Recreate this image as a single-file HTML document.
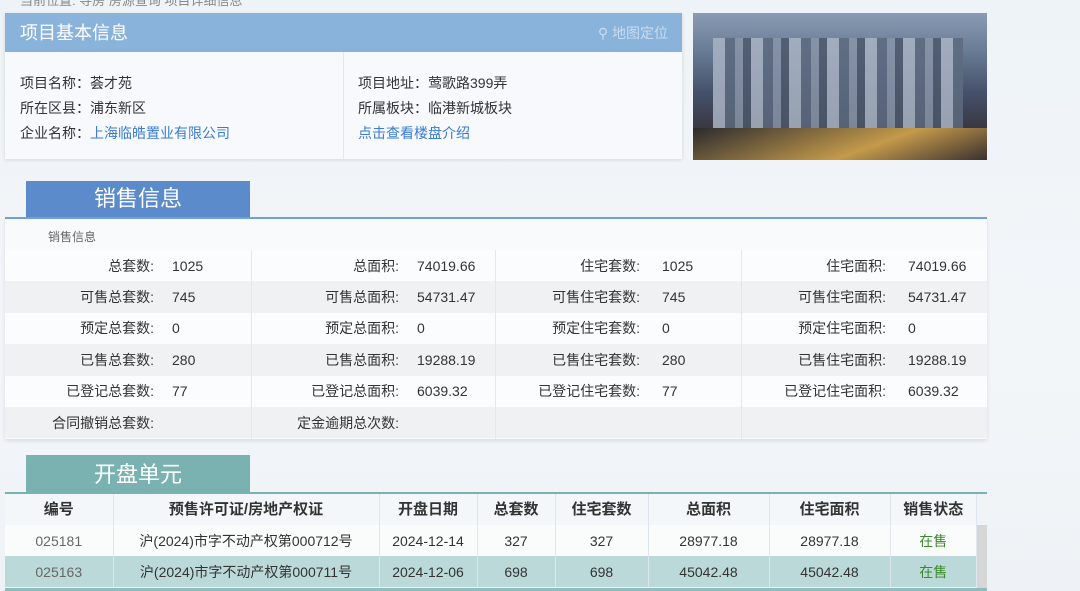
<!DOCTYPE html><html><head><meta charset="utf-8"><style>
body{margin:0;width:1080px;height:591px;overflow:hidden;background:linear-gradient(180deg,#eef3f8,#f3f6f9 60%,#eef2f6);font-family:"Liberation Sans","Noto Sans CJK SC",sans-serif;font-size:14px;color:#333;position:relative}
.a{position:absolute}
.top{left:5px;top:13px;width:677px;height:146px;background:#f7f9fc;box-shadow:0 1px 4px rgba(0,0,0,.12)}
.hd{height:39px;background:#8ab3dc;color:#fff;font-size:18px;line-height:41px;padding-left:15px}
.hd span{position:absolute;right:14px;top:0;font-size:14px;color:#c8dcf0}
.t{position:absolute;font-size:14px}
a{color:#3a7bd5;text-decoration:none}
table{border-collapse:collapse;table-layout:fixed}
td{padding:0}
.s td{height:31.4px;font-size:14px;line-height:16px}
.s td.l{text-align:right;padding-right:18px}
.s td.l2{text-align:right;padding-right:22px}
.s tr:nth-child(even){background:#f0f1f3}
.s tr:nth-child(odd){background:#fbfcfd}
.u td{border-right:1px solid #dde6ee;text-align:center;height:31px;line-height:16px;color:#333}
</style></head><body>
<div class="a" style="left:20px;top:-10px;color:#888;font-size:13px">当前位置: 导房 房源查询 项目详细信息</div>
<div class="a top"><div class="hd">项目基本信息<span>&#9906; 地图定位</span></div>
<div class="a" style="left:338px;top:39px;width:1px;height:107px;background:#e2e8ef"></div>
<div class="t" style="left:15px;top:60px">项目名称：荟才苑</div>
<div class="t" style="left:15px;top:85px">所在区县：浦东新区</div>
<div class="t" style="left:15px;top:110px">企业名称：<a>上海临皓置业有限公司</a></div>
<div class="t" style="left:353px;top:60px">项目地址：莺歌路399弄</div>
<div class="t" style="left:353px;top:85px">所属板块：临港新城板块</div>
<div class="t" style="left:353px;top:110px"><a>点击查看楼盘介绍</a></div>
</div>
<div class="a" style="left:693px;top:13px;width:294px;height:147px;overflow:hidden;background:linear-gradient(180deg,#8a9cb4 0%,#6a7d96 25%,#44506a 55%,#3a3540 80%,#5a4a38 100%)">
<div class="a" style="left:20px;top:25px;width:250px;height:100px;background:repeating-linear-gradient(90deg,#a9b4c4 0 12px,#5d6a80 12px 22px,#8894a8 22px 30px,#4d586c 30px 38px);opacity:.85"></div>
<div class="a" style="left:0;top:115px;width:294px;height:32px;background:linear-gradient(160deg,#2b2a2e,#c49a4a 60%,#3a3030)"></div></div>
<div class="a" style="left:5px;top:217px;width:982px;height:2px;background:#6fa2d6"></div>
<div class="a" style="left:26px;top:181px;width:224px;height:36px;background:#5b8bcb;color:#fff;font-size:22px;line-height:36px;text-align:center">销售信息</div>
<div class="a" style="left:5px;top:219px;width:982px;height:220px;background:#f8fafc;box-shadow:0 2px 4px rgba(0,0,0,.1)">
<div class="a" style="left:43px;top:9px;font-size:12px;color:#666">销售信息</div>
<table class="s a" style="left:0;top:31px;width:982px">
<colgroup><col style="width:167px"><col style="width:79px"><col style="width:166px"><col style="width:78px"><col style="width:167px"><col style="width:79px"><col style="width:167px"><col></colgroup>
<tr><td class="l">总套数:</td><td>1025</td><td class="l">总面积:</td><td>74019.66</td><td class="l2">住宅套数:</td><td>1025</td><td class="l2">住宅面积:</td><td>74019.66</td></tr>
<tr><td class="l">可售总套数:</td><td>745</td><td class="l">可售总面积:</td><td>54731.47</td><td class="l2">可售住宅套数:</td><td>745</td><td class="l2">可售住宅面积:</td><td>54731.47</td></tr>
<tr><td class="l">预定总套数:</td><td>0</td><td class="l">预定总面积:</td><td>0</td><td class="l2">预定住宅套数:</td><td>0</td><td class="l2">预定住宅面积:</td><td>0</td></tr>
<tr><td class="l">已售总套数:</td><td>280</td><td class="l">已售总面积:</td><td>19288.19</td><td class="l2">已售住宅套数:</td><td>280</td><td class="l2">已售住宅面积:</td><td>19288.19</td></tr>
<tr><td class="l">已登记总套数:</td><td>77</td><td class="l">已登记总面积:</td><td>6039.32</td><td class="l2">已登记住宅套数:</td><td>77</td><td class="l2">已登记住宅面积:</td><td>6039.32</td></tr>
<tr><td class="l">合同撤销总套数:</td><td></td><td class="l">定金逾期总次数:</td><td></td><td></td><td></td><td></td><td></td></tr>
</table>
<div class="a" style="left:246px;top:31px;width:1px;height:189px;background:#e4e8ec"></div>
<div class="a" style="left:490px;top:31px;width:1px;height:189px;background:#e4e8ec"></div>
<div class="a" style="left:736px;top:31px;width:1px;height:189px;background:#e4e8ec"></div>
</div>
<div class="a" style="left:26px;top:455px;width:224px;height:37px;background:#7ab2b2;color:#fff;font-size:22px;line-height:40px;text-align:center">开盘单元</div>
<div class="a" style="left:5px;top:492px;width:982px;height:2px;background:#7ab2b2"></div>
<table class="u a" style="left:5px;top:494px;width:972px">
<colgroup><col style="width:108px"><col style="width:266px"><col style="width:98px"><col style="width:78px"><col style="width:93px"><col style="width:121px"><col style="width:121px"><col></colgroup>
<tr style="background:#f4f7f9;font-weight:bold;font-size:15px"><td>编号</td><td>预售许可证/房地产权证</td><td>开盘日期</td><td>总套数</td><td>住宅套数</td><td>总面积</td><td>住宅面积</td><td>销售状态</td></tr>
<tr style="background:#fafbfb"><td style="color:#666">025181</td><td>沪(2024)市字不动产权第000712号</td><td>2024-12-14</td><td>327</td><td>327</td><td>28977.18</td><td>28977.18</td><td style="color:#3a8a2a">在售</td></tr>
<tr style="background:#bcd9d9"><td style="color:#666">025163</td><td>沪(2024)市字不动产权第000711号</td><td>2024-12-06</td><td>698</td><td>698</td><td>45042.48</td><td>45042.48</td><td style="color:#3a8a2a">在售</td></tr>
</table>
<div class="a" style="left:977px;top:525px;width:10px;height:63px;background:#d6d6d6"></div>
<div class="a" style="left:5px;top:588px;width:982px;height:3px;background:#8fbcbc"></div>
</body></html>
